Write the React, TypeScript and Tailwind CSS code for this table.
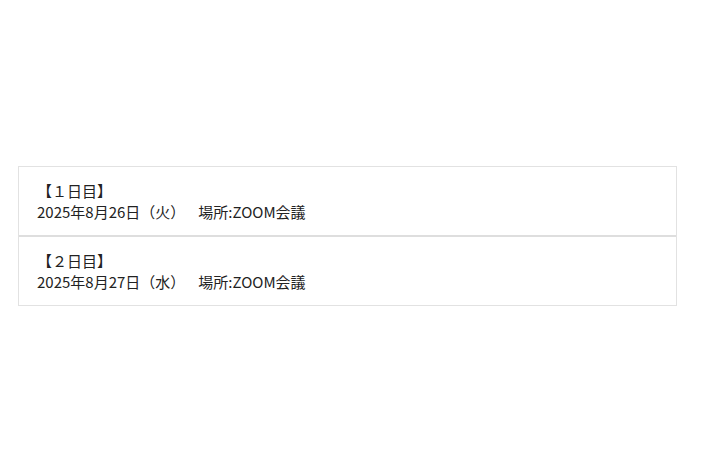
export default function App() {
  const rows = [
    { day: "【１日目】", date: "2025年8月26日（火）" },
    { day: "【２日目】", date: "2025年8月27日（水）" },
  ];
  return (
    <div
      className="w-[710px] h-[474px] bg-white pt-[166px] pl-[18px]"
      style={{ fontFamily: '"Noto Sans CJK JP", "Noto Sans", sans-serif' }}
    >
      <div className="w-[659px] border border-[#e2e2e2]">
        {rows.map((r, i) => (
          <div
            key={i}
            className={`px-[18px] py-[13px] text-[15px] leading-[21px] text-[#222] ${i > 0 ? "border-t-2 border-[#dedede]" : ""}`}
          >
            <div>{r.day}</div>
            <div>
              {r.date}
              <span className="inline-block w-[13px]"></span>
              場所:ZOOM会議
            </div>
          </div>
        ))}
      </div>
    </div>
  );
}
